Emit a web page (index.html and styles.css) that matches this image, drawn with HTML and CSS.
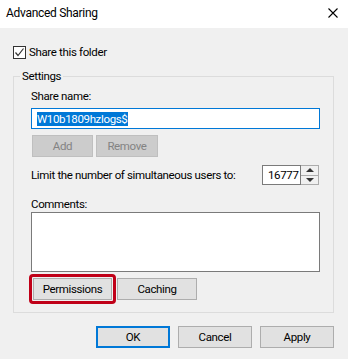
FILE: index.html
```html
<!DOCTYPE html>
<html lang="en">
<head>
  <meta charset="UTF-8" />
  <title>Advanced Sharing</title>
  <link rel="stylesheet" href="styles.css">
</head>
<body>

  <div class="titlebar">
    <span class="title">Advanced Sharing</span>
    <svg class="close" width="10" height="10" viewBox="0 0 10 10">
      <path d="M0.5 0.5 L9.5 9.5 M9.5 0.5 L0.5 9.5" stroke="#000" stroke-width="1.1" fill="none"/>
    </svg>
  </div>

  <div class="main">
    <label class="check-row">
      <span class="checkbox">
        <svg width="11" height="11" viewBox="0 0 11 11">
          <path d="M1.5 5.5 L4 8.5 L9.5 1.5" stroke="#333" stroke-width="1.2" fill="none"/>
        </svg>
      </span>
      Share this folder
    </label>

    <fieldset class="group">
      <legend>Settings</legend>
      <div class="inner">
        <div class="label">Share name:</div>
        <div class="textbox focused"><span class="sel">W10b1809hzlogs$</span></div>

        <div class="btn-row">
          <button class="btn disabled add">Add</button>
          <button class="btn disabled remove">Remove</button>
        </div>

        <div class="limit-row">
          <span class="limit-text">Limit the number of simultaneous users to:</span>
          <div class="spinner">
            <div class="spin-value">16777</div>
            <div class="spin-arrows">
              <div class="arrow up"></div>
              <div class="arrow down"></div>
            </div>
          </div>
        </div>

        <div class="label comments">Comments:</div>
        <div class="textarea"></div>

        <div class="btn-row bottom">
          <span class="highlight"><button class="btn perm">Permissions</button></span>
          <button class="btn caching">Caching</button>
        </div>
      </div>
    </fieldset>

    <div class="dialog-buttons">
      <button class="btn dlg default">OK</button>
      <button class="btn dlg">Cancel</button>
      <button class="btn dlg">Apply</button>
    </div>
  </div>

</body>
</html>
```

FILE: styles.css
```css
body {
  margin: 0;
  font-family: Roboto, "Liberation Sans", sans-serif;
  font-size: 11.5px;
  letter-spacing: -0.35px;
  color: #000;
  background: #f0f0f0;
  width: 348px;
  height: 359px;
  overflow: hidden;
}
.titlebar {
  height: 28px;
  background: #fff;
  display: flex;
  align-items: center;
  justify-content: space-between;
  padding: 0 10px 0 6px;
}
.title {
  font-size: 12px;
  letter-spacing: -0.3px;
  line-height: 16px;
  margin-top: -2px;
}
.close {
  margin-top: -2px;
}
.main {
  padding: 0 14px 0 13px;
}
.check-row {
  display: flex;
  align-items: center;
  gap: 3px;
  height: 16px;
  line-height: 16px;
  margin-top: 16px;
}
.checkbox {
  width: 11px;
  height: 11px;
  border: 1px solid #333;
  background: #fff;
  display: flex;
}
.group {
  margin: 8px 0 0 0;
  width: 321px;
  box-sizing: border-box;
  border: 1px solid #dcdcdc;
  padding: 0 6px 8px 6px;
}
.group legend {
  padding: 0 2px;
  line-height: 16px;
}
.inner {
  padding: 4px 0 0 11px;
}
.label {
  line-height: 16px;
}
.textbox {
  margin-top: 4px;
  width: 289px;
  height: 21px;
  box-sizing: border-box;
  background: #fff;
  border: 1px solid #7a7a7a;
  padding-left: 5px;
  display: flex;
  align-items: center;
}
.textbox.focused {
  border-color: #0078d7;
}
.sel {
  background: #0078d7;
  color: #fff;
  line-height: 14px;
  padding-right: 1px;
}
.btn-row {
  display: flex;
  gap: 3px;
  margin-top: 6px;
  padding-left: 1px;
}
.btn {
  font-family: inherit;
  font-size: 11.5px;
  letter-spacing: inherit;
  height: 22px;
  box-sizing: border-box;
  background: #e1e1e1;
  border: 1px solid #adadad;
  color: #000;
  padding: 0;
  margin: 0;
}
.btn.disabled {
  background: #cccccc;
  border-color: #bfbfbf;
  color: #838383;
}
.add {
  width: 61px;
}
.remove {
  width: 62px;
}
.limit-row {
  display: flex;
  align-items: center;
  justify-content: space-between;
  width: 288px;
  margin-top: 8px;
  height: 20px;
}
.limit-text {
  white-space: nowrap;
}
.spinner {
  display: flex;
  flex-shrink: 0;
  width: 57px;
  height: 20px;
}
.spin-value {
  width: 39px;
  box-sizing: border-box;
  border: 1px solid #7a7a7a;
  background: #fff;
  padding-left: 5px;
  line-height: 18px;
  overflow: hidden;
  white-space: nowrap;
}
.spin-arrows {
  width: 18px;
  box-sizing: border-box;
  border: 1px solid #acacac;
  border-left: none;
  display: flex;
  flex-direction: column;
  background: #f0f0f0;
}
.arrow {
  flex: 1;
  display: flex;
  align-items: center;
  justify-content: center;
}
.arrow.up {
  border-bottom: 1px solid #acacac;
}
.arrow.up::after {
  content: "";
  border-left: 4px solid transparent;
  border-right: 4px solid transparent;
  border-bottom: 4px solid #333;
}
.arrow.down::after {
  content: "";
  border-left: 4px solid transparent;
  border-right: 4px solid transparent;
  border-top: 4px solid #333;
}
.comments {
  margin-top: 12px;
  line-height: 15px;
}
.textarea {
  width: 289px;
  height: 60px;
  box-sizing: border-box;
  background: #fff;
  border: 1px solid #7a7a7a;
}
.btn-row.bottom {
  margin-top: 2px;
  margin-left: -3px;
  gap: 1px;
  align-items: center;
}
.highlight {
  border: 3px solid #c00018;
  border-radius: 4px;
  padding: 1px;
  display: flex;
}
.perm {
  width: 79px;
}
.caching {
  width: 80px;
}
.dialog-buttons {
  display: flex;
  justify-content: flex-end;
  gap: 8px;
  margin-top: 13px;
  width: 321px;
}
.dlg {
  width: 74px;
}
.dlg.default {
  border: 2px solid #0078d7;
}
```
